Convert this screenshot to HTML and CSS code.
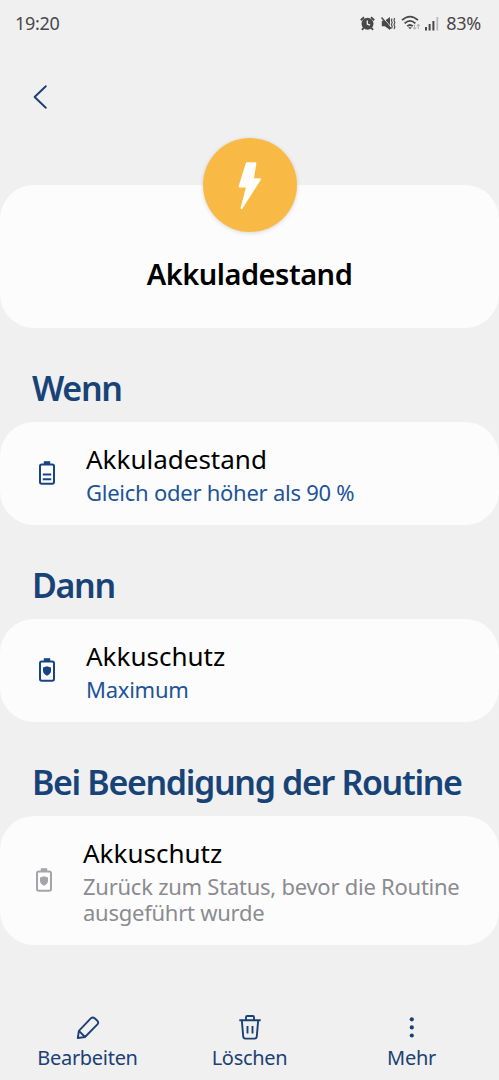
FILE: index.html
```html
<!DOCTYPE html>
<html lang="de">

<head>
    <meta charset="UTF-8" />
    <title>Akkuladestand</title>
    <link rel="stylesheet" href="styles.css">
</head>

<body>
    <!-- Status bar -->
    <div class="status-bar">
        <span>19:20</span>
        <div class="status-icons">
            <svg class="icon-alarm" width="15" height="15" viewBox="0 0 15 15">
                <circle cx="7.5" cy="7.8" r="6" fill="#484848" />
                <path d="M.8 4.2 4 1.2M14.2 4.2 11 1.2M3.5 12 2 13.9M11.5 12l1.5 1.9" stroke="#484848" stroke-width="1.9" />
                <path d="M7.3 4.4V8l2.8 1.2" fill="none" stroke="#f0f0f0" stroke-width="1.3" />
            </svg>
            <svg class="icon-mute" width="15" height="15" viewBox="0 0 15 15">
                <path d="M.8 4.8h3L9 1v13L3.8 10.2h-3z" fill="#484848" />
                <path d="M1.4 1 10.6 11.6" stroke="#f0f0f0" stroke-width="1" />
                <path d="M.5 1.5 10 12.8" stroke="#484848" stroke-width="1.4" />
                <path d="M11 2.5l-.6 2 .8 2-.8 2 .8 2-.6 2M13.6 2l-.6 2.5.8 2-.8 2.2.8 2-.6 2.3" fill="none" stroke="#555" stroke-width="1.2" />
            </svg>
            <svg class="icon-wifi" width="20" height="16" viewBox="0 0 20 16">
                <path d="M1 5.2Q9 -2 17 5.2M3.6 8.3Q9 3.4 14.4 8.3M6.2 11.2Q9 8.7 11.8 11.2" fill="none" stroke="#484848" stroke-width="1.8" />
                <path d="M7.2 12.2h3.6L9 14.2z" fill="#484848" />
                <path d="M13.6 9.5v4.5M12 12.5l1.6 1.8 1.6-1.8M17.3 14V9.5M15.8 11l1.5-1.8 1.5 1.8" fill="none" stroke="#aaa" stroke-width="1" />
            </svg>
            <svg class="icon-signal" width="14" height="15" viewBox="0 0 14 15">
                <path d="M1 11v3.5M4.6 8v6.5M8.4 5v9.5" stroke="#484848" stroke-width="2" />
                <path d="M12.3 1v13.5" stroke="#b8b8b8" stroke-width="1.8" />
            </svg>
            <span>83%</span>
        </div>
    </div>

    <header>
        <svg class="back" width="16" height="26" viewBox="0 0 16 26">
            <path d="M13.8 2.2 2.6 13l11.2 10.8" fill="none" stroke="#1b3f73" stroke-width="1.9" stroke-linecap="round" stroke-linejoin="round" />
        </svg>
    </header>

    <!-- Routine name with the badge over the card edge -->
    <section class="card hero">
        <div class="badge">
            <svg width="24" height="48" viewBox="0 0 24 48">
                <path d="M8.8 2.2h8.6l-2.6 16H22L3.6 47 9.2 25.5H1.6z" fill="#fffefa" stroke="#fffefa" stroke-width="2" stroke-linejoin="round" />
            </svg>
        </div>
        <h1>Akkuladestand</h1>
    </section>

    <h2>Wenn</h2>
    <section class="card row">
        <svg class="battery" width="18" height="26" viewBox="0 0 18 26">
            <rect x="2" y="4.4" width="14" height="19.4" rx="1.8" fill="none" stroke="currentColor" stroke-width="2" />
            <path d="M5.8 1.2h6.4v3H5.8z" fill="currentColor" />
            <path d="M4.8 14.5h8.4M4.8 19.2h8.4" stroke="currentColor" stroke-width="2" />
        </svg>
        <div>
            <div class="row-title">Akkuladestand</div>
            <div class="row-sub">Gleich oder höher als 90 %</div>
        </div>
    </section>

    <h2>Dann</h2>
    <section class="card row">
        <svg class="battery" width="18" height="26" viewBox="0 0 18 26">
            <rect x="2" y="4.4" width="14" height="19.4" rx="1.8" fill="none" stroke="currentColor" stroke-width="2" />
            <path d="M5.8 1.2h6.4v3H5.8z" fill="currentColor" />
            <path d="M9 9.2l4 1.2v3.4q0 3.2-4 4.9-4-1.7-4-4.9v-3.4z" fill="currentColor" />
        </svg>
        <div>
            <div class="row-title">Akkuschutz</div>
            <div class="row-sub">Maximum</div>
        </div>
    </section>

    <h2>Bei Beendigung der Routine</h2>
    <section class="card row ended">
        <svg class="battery" width="18" height="26" viewBox="0 0 18 26">
            <rect x="2" y="4.4" width="14" height="19.4" rx="1.8" fill="none" stroke="currentColor" stroke-width="2" />
            <path d="M5.8 1.2h6.4v3H5.8z" fill="currentColor" />
            <path d="M9 9.2l4 1.2v3.4q0 3.2-4 4.9-4-1.7-4-4.9v-3.4z" fill="currentColor" />
        </svg>
        <div>
            <div class="row-title">Akkuschutz</div>
            <div class="row-sub">Zurück zum Status, bevor die Routine<br>ausgeführt wurde</div>
        </div>
    </section>

    <!-- Bottom actions -->
    <nav>
        <div class="action">
            <svg width="26" height="26" viewBox="0 0 26 26">
                <path d="M2.8 24 3.9 16.8 16 4.2Q17.8 2.6 19.6 4.2L22.4 6.8Q24 8.6 22.4 10.4L10 23ZM3.9 16.8l6.1 6.2" fill="none" stroke="currentColor" stroke-width="1.9" stroke-linejoin="round" />
            </svg>
            <span>Bearbeiten</span>
        </div>
        <div class="action">
            <svg width="26" height="26" viewBox="0 0 26 26">
                <path d="M2.3 6.2h21.4M9 6V3.2Q9 2 10.2 2h5.6Q17 2 17 3.2V6M4.8 6.2l1.4 16.2Q6.4 24.6 8.4 24.6h9.2Q19.6 24.6 19.8 22.4L21.2 6.2M10.5 12v7.5M15.5 12v7.5" fill="none" stroke="currentColor" stroke-width="1.9" />
            </svg>
            <span>Löschen</span>
        </div>
        <div class="action">
            <svg width="26" height="26" viewBox="0 0 26 26">
                <g fill="currentColor">
                    <circle cx="12.8" cy="5.3" r="2.1" />
                    <circle cx="12.8" cy="13.4" r="2.1" />
                    <circle cx="12.8" cy="21.5" r="2.1" />
                </g>
            </svg>
            <span>Mehr</span>
        </div>
    </nav>
</body>

</html>
```

FILE: styles.css
```css
* {
    box-sizing: border-box;
}

body {
    margin: 0;
    height: 1080px;
    display: flex;
    flex-direction: column;
    overflow: hidden;
    font-family: "Noto Sans", sans-serif;
    background: #f0f0f0;
    color: #000;
}

svg {
    display: block;
    flex: none;
}

/* Status bar */
.status-bar {
    display: flex;
    justify-content: space-between;
    height: 46px;
    padding: 0 18px 0 15px;
    font-size: 18px;
    line-height: 46px;
    letter-spacing: -0.3px;
    color: #484848;
}

.status-icons {
    display: flex;
    align-items: center;
}

.icon-alarm {
    margin-right: 6px;
}

.icon-mute {
    margin-right: 5px;
}

.icon-wifi {
    margin-right: 4px;
}

.icon-signal {
    margin-right: 7px;
}

header {
    height: 139px;
    padding: 38px 0 0 32px;
}

/* Cards */
.card {
    background: #fcfcfd;
    border-radius: 34px;
}

.hero {
    position: relative;
    height: 143px;
    padding-top: 69px;
    text-align: center;
}

.badge {
    position: absolute;
    top: -47px;
    left: 50%;
    display: flex;
    align-items: center;
    justify-content: center;
    width: 94px;
    height: 94px;
    margin-left: -47px;
    border-radius: 50%;
    background: #f9ba45;
    box-shadow: 0 1px 4px rgba(0, 0, 0, 0.15);
}

h1 {
    margin: 0;
    font-size: 29px;
    font-weight: 600;
    line-height: 40px;
    letter-spacing: -0.5px;
}

h2 {
    margin: 36px 0 10px 32px;
    font-size: 34px;
    font-weight: 600;
    line-height: 48px;
    letter-spacing: -1.35px;
    white-space: nowrap;
    color: #174377;
}

.row {
    display: flex;
    align-items: center;
    gap: 30px;
    padding: 19px 0 20px 38px;
}

.battery {
    color: #174584;
}

.row-title {
    margin-bottom: 2px;
    font-size: 26px;
    line-height: 36px;
}

.row-sub {
    font-size: 22px;
    line-height: 26px;
    letter-spacing: -0.25px;
    white-space: nowrap;
    color: #1d5499;
}

.ended {
    padding-left: 35px;
}

.ended .battery {
    color: #a5a5a9;
}

.ended .row-sub {
    color: #8b8b90;
}

/* Bottom actions */
nav {
    display: grid;
    grid-template-columns: repeat(3, 162px);
    justify-content: center;
    margin-top: 69px;
}

.action {
    display: flex;
    flex-direction: column;
    align-items: center;
    gap: 5px;
    font-size: 20px;
    line-height: 26px;
    letter-spacing: -0.3px;
    color: #1b4174;
}
```
